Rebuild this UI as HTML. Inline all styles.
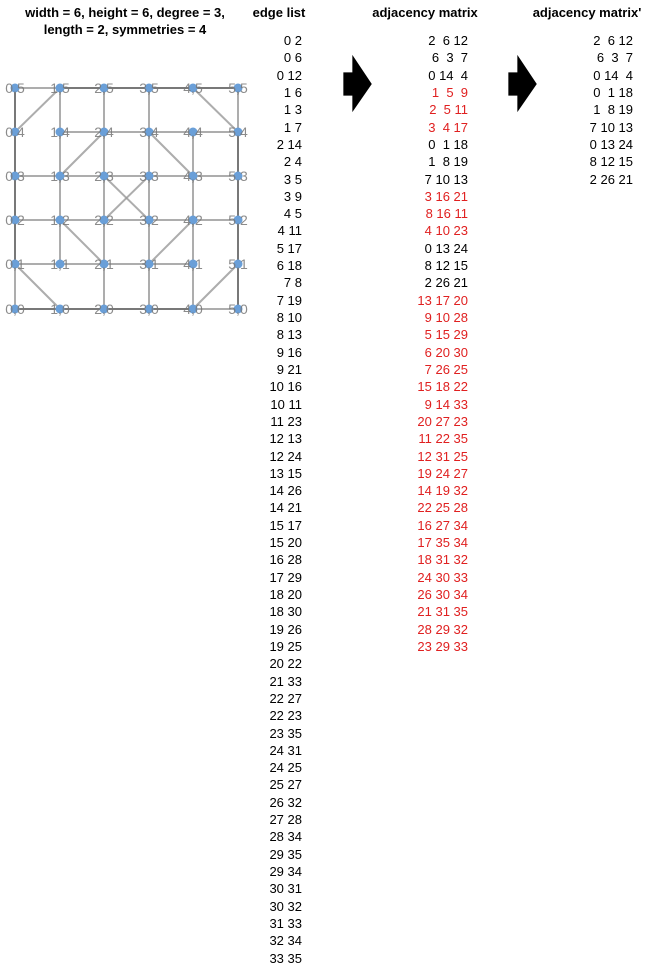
<!DOCTYPE html>
<html><head><meta charset="utf-8"><style>
body{margin:0;width:650px;height:967px;background:#fff;position:relative;font-family:"Liberation Sans",Arial,sans-serif;color:#000;overflow:hidden}
.t{position:absolute;font-weight:bold;font-size:13px;text-align:center;line-height:17px}
.col{position:absolute;top:32px;font-size:13px;line-height:17.32px;text-align:right}
.col div{height:17.32px;white-space:pre}
.r{color:#e02020}
</style></head><body>
<div class="t" style="left:0;width:250px;top:4px">width = 6, height = 6, degree = 3,<br>length = 2, symmetries = 4</div>
<div class="t" style="left:239px;width:80px;top:4px">edge list</div>
<div class="t" style="left:360px;width:130px;top:4px">adjacency matrix</div>
<div class="t" style="left:522px;width:130px;top:4px">adjacency matrix'</div>

<svg style="position:absolute;left:0;top:0" width="650" height="330">
<g stroke="#000" stroke-width="1.3">
<polygon points="344,73 353,73 353,57 371,84 353,110 353,95 344,95"/>
<polygon points="509,73 518,73 518,57 536,84 518,110 518,95 509,95"/>
</g>
<g stroke="#999" stroke-width="2" stroke-opacity="0.8">
<line x1="15" y1="88" x2="238" y2="88"/>
<line x1="60" y1="132" x2="238" y2="132"/>
<line x1="15" y1="176" x2="238" y2="176"/>
<line x1="15" y1="220" x2="238" y2="220"/>
<line x1="15" y1="264" x2="193" y2="264"/>
<line x1="15" y1="309" x2="238" y2="309"/>
<line x1="15" y1="88" x2="15" y2="309"/>
<line x1="60" y1="88" x2="60" y2="264"/>
<line x1="104" y1="88" x2="104" y2="309"/>
<line x1="149" y1="88" x2="149" y2="309"/>
<line x1="193" y1="132" x2="193" y2="309"/>
<line x1="238" y1="88" x2="238" y2="309"/>
<line x1="60" y1="88" x2="15" y2="132"/>
<line x1="193" y1="88" x2="238" y2="132"/>
<line x1="104" y1="132" x2="60" y2="176"/>
<line x1="149" y1="132" x2="193" y2="176"/>
<line x1="104" y1="176" x2="149" y2="220"/>
<line x1="149" y1="176" x2="104" y2="220"/>
<line x1="60" y1="220" x2="104" y2="264"/>
<line x1="193" y1="220" x2="149" y2="264"/>
<line x1="15" y1="264" x2="60" y2="309"/>
<line x1="238" y1="264" x2="193" y2="309"/>
</g>
<g stroke="#555" stroke-width="2" stroke-opacity="0.6">
<line x1="15" y1="88" x2="15" y2="264"/><line x1="238" y1="132" x2="238" y2="309"/>
<line x1="60" y1="88" x2="238" y2="88"/><line x1="15" y1="309" x2="193" y2="309"/>
</g>
<g fill="#6a9fd8">
<circle cx="15" cy="88" r="4.5"/><circle cx="60" cy="88" r="4.5"/><circle cx="104" cy="88" r="4.5"/><circle cx="149" cy="88" r="4.5"/><circle cx="193" cy="88" r="4.5"/><circle cx="238" cy="88" r="4.5"/>
<circle cx="15" cy="132" r="4.5"/><circle cx="60" cy="132" r="4.5"/><circle cx="104" cy="132" r="4.5"/><circle cx="149" cy="132" r="4.5"/><circle cx="193" cy="132" r="4.5"/><circle cx="238" cy="132" r="4.5"/>
<circle cx="15" cy="176" r="4.5"/><circle cx="60" cy="176" r="4.5"/><circle cx="104" cy="176" r="4.5"/><circle cx="149" cy="176" r="4.5"/><circle cx="193" cy="176" r="4.5"/><circle cx="238" cy="176" r="4.5"/>
<circle cx="15" cy="220" r="4.5"/><circle cx="60" cy="220" r="4.5"/><circle cx="104" cy="220" r="4.5"/><circle cx="149" cy="220" r="4.5"/><circle cx="193" cy="220" r="4.5"/><circle cx="238" cy="220" r="4.5"/>
<circle cx="15" cy="264" r="4.5"/><circle cx="60" cy="264" r="4.5"/><circle cx="104" cy="264" r="4.5"/><circle cx="149" cy="264" r="4.5"/><circle cx="193" cy="264" r="4.5"/><circle cx="238" cy="264" r="4.5"/>
<circle cx="15" cy="309" r="4.5"/><circle cx="60" cy="309" r="4.5"/><circle cx="104" cy="309" r="4.5"/><circle cx="149" cy="309" r="4.5"/><circle cx="193" cy="309" r="4.5"/><circle cx="238" cy="309" r="4.5"/>
</g>
<g fill="#777" font-family="Liberation Sans, sans-serif" font-size="14" text-anchor="middle" opacity="0.85">
<text x="15" y="93">0,5</text><text x="60" y="93">1,5</text><text x="104" y="93">2,5</text><text x="149" y="93">3,5</text><text x="193" y="93">4,5</text><text x="238" y="93">5,5</text>
<text x="15" y="137">0,4</text><text x="60" y="137">1,4</text><text x="104" y="137">2,4</text><text x="149" y="137">3,4</text><text x="193" y="137">4,4</text><text x="238" y="137">5,4</text>
<text x="15" y="181">0,3</text><text x="60" y="181">1,3</text><text x="104" y="181">2,3</text><text x="149" y="181">3,3</text><text x="193" y="181">4,3</text><text x="238" y="181">5,3</text>
<text x="15" y="225">0,2</text><text x="60" y="225">1,2</text><text x="104" y="225">2,2</text><text x="149" y="225">3,2</text><text x="193" y="225">4,2</text><text x="238" y="225">5,2</text>
<text x="15" y="269">0,1</text><text x="60" y="269">1,1</text><text x="104" y="269">2,1</text><text x="149" y="269">3,1</text><text x="193" y="269">4,1</text><text x="238" y="269">5,1</text>
<text x="15" y="314">0,0</text><text x="60" y="314">1,0</text><text x="104" y="314">2,0</text><text x="149" y="314">3,0</text><text x="193" y="314">4,0</text><text x="238" y="314">5,0</text>
</g>
</svg>

<div class="col" style="left:240px;width:62px">
<div>0 2</div><div>0 6</div><div>0 12</div><div>1 6</div><div>1 3</div><div>1 7</div><div>2 14</div><div>2 4</div><div>3 5</div><div>3 9</div><div>4 5</div><div>4 11</div><div>5 17</div><div>6 18</div><div>7 8</div><div>7 19</div><div>8 10</div><div>8 13</div><div>9 16</div><div>9 21</div><div>10 16</div><div>10 11</div><div>11 23</div><div>12 13</div><div>12 24</div><div>13 15</div><div>14 26</div><div>14 21</div><div>15 17</div><div>15 20</div><div>16 28</div><div>17 29</div><div>18 20</div><div>18 30</div><div>19 26</div><div>19 25</div><div>20 22</div><div>21 33</div><div>22 27</div><div>22 23</div><div>23 35</div><div>24 31</div><div>24 25</div><div>25 27</div><div>26 32</div><div>27 28</div><div>28 34</div><div>29 35</div><div>29 34</div><div>30 31</div><div>30 32</div><div>31 33</div><div>32 34</div><div>33 35</div>
</div>

<div class="col" style="left:388px;width:80px">
<div>2  6 12</div>
<div>6  3  7</div>
<div>0 14  4</div>
<div class="r">1  5  9</div>
<div class="r">2  5 11</div>
<div class="r">3  4 17</div>
<div>0  1 18</div>
<div>1  8 19</div>
<div>7 10 13</div>
<div class="r">3 16 21</div>
<div class="r">8 16 11</div>
<div class="r">4 10 23</div>
<div>0 13 24</div>
<div>8 12 15</div>
<div>2 26 21</div>
<div class="r">13 17 20</div>
<div class="r">9 10 28</div>
<div class="r">5 15 29</div>
<div class="r">6 20 30</div>
<div class="r">7 26 25</div>
<div class="r">15 18 22</div>
<div class="r">9 14 33</div>
<div class="r">20 27 23</div>
<div class="r">11 22 35</div>
<div class="r">12 31 25</div>
<div class="r">19 24 27</div>
<div class="r">14 19 32</div>
<div class="r">22 25 28</div>
<div class="r">16 27 34</div>
<div class="r">17 35 34</div>
<div class="r">18 31 32</div>
<div class="r">24 30 33</div>
<div class="r">26 30 34</div>
<div class="r">21 31 35</div>
<div class="r">28 29 32</div>
<div class="r">23 29 33</div>
</div>

<div class="col" style="left:553px;width:80px">
<div>2  6 12</div>
<div>6  3  7</div>
<div>0 14  4</div>
<div>0  1 18</div>
<div>1  8 19</div>
<div>7 10 13</div>
<div>0 13 24</div>
<div>8 12 15</div>
<div>2 26 21</div>
</div>
</body></html>
